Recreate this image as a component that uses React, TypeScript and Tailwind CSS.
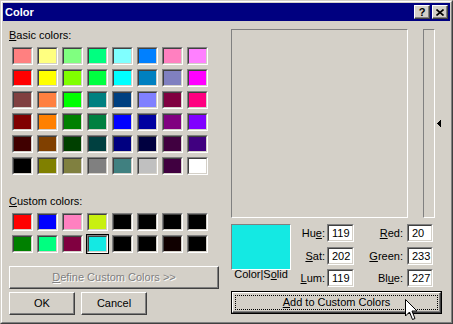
import * as React from 'react';
import clsx from 'clsx';

const basicColors = [
	'bg-[#ff8080]', 'bg-[#ffff80]', 'bg-[#80ff80]', 'bg-[#00ff80]', 'bg-[#80ffff]', 'bg-[#0080ff]', 'bg-[#ff80c0]', 'bg-[#ff80ff]',
	'bg-[#ff0000]', 'bg-[#ffff00]', 'bg-[#80ff00]', 'bg-[#00ff40]', 'bg-[#00ffff]', 'bg-[#0080c0]', 'bg-[#8080c0]', 'bg-[#ff00ff]',
	'bg-[#804040]', 'bg-[#ff8040]', 'bg-[#00ff00]', 'bg-[#008080]', 'bg-[#004080]', 'bg-[#8080ff]', 'bg-[#800040]', 'bg-[#ff0080]',
	'bg-[#800000]', 'bg-[#ff8000]', 'bg-[#008000]', 'bg-[#008040]', 'bg-[#0000ff]', 'bg-[#0000a0]', 'bg-[#800080]', 'bg-[#8000ff]',
	'bg-[#400000]', 'bg-[#804000]', 'bg-[#004000]', 'bg-[#004040]', 'bg-[#000080]', 'bg-[#000040]', 'bg-[#400040]', 'bg-[#400080]',
	'bg-[#000000]', 'bg-[#808000]', 'bg-[#808040]', 'bg-[#808080]', 'bg-[#408080]', 'bg-[#c0c0c0]', 'bg-[#400040]', 'bg-[#ffffff]',
];

const customColors = [
	'bg-[#ff0000]', 'bg-[#0000ff]', 'bg-[#ff80c0]', 'bg-[#c8f010]', 'bg-[#000000]', 'bg-[#000000]', 'bg-[#000000]', 'bg-[#000000]',
	'bg-[#008000]', 'bg-[#00ff80]', 'bg-[#800040]', 'bg-[#14e9e3]', 'bg-[#000000]', 'bg-[#000000]', 'bg-[#100000]', 'bg-[#000000]',
];

const sunken = 'border border-t-[#808080] border-l-[#808080] border-r-white border-b-white';
const sunkenInner = 'border border-t-[#404040] border-l-[#404040] border-r-[#d4d0c8] border-b-[#d4d0c8]';
const raised =
	'border border-t-white border-l-white border-b-[#404040] border-r-[#404040] shadow-[inset_-1px_-1px_#808080]';

function Swatch({ color, selected }: { color: string; selected?: boolean }) {
	return (
		<div className={clsx('h-[18px] w-[21px]', sunken, selected && 'outline-1 outline-black')}>
			<div className={clsx('h-full w-full', sunkenInner, color)} />
		</div>
	);
}

function Field({ value, width }: { value: string; width: string }) {
	return (
		<div className={clsx('h-[18px]', width, sunken)}>
			<div className={clsx('h-full bg-white pl-[3px] leading-[14px]', sunkenInner)}>{value}</div>
		</div>
	);
}

function Button({ children, className }: { children: React.ReactNode; className?: string }) {
	return <div className={clsx('flex items-center justify-center', raised, className)}>{children}</div>;
}

export default function App() {
	return (
		<div className="relative h-[324px] w-[453px] border border-t-[#d4d0c8] border-l-[#d4d0c8] border-b-[#404040] border-r-[#404040] bg-[#d4d0c8] font-['Liberation_Sans',Arial,sans-serif] text-[11px] leading-[13px] text-black">
			<div className="flex h-full flex-col border border-t-white border-l-white border-b-[#808080] border-r-[#808080] p-[1px]">
				{/* title bar */}
				<div className="flex h-[18px] items-center bg-[#000080] pl-[2px] pr-[2px]">
					<span className="flex-1 text-[11px] font-bold text-white">Color</span>
					<Button className="h-[14px] w-[16px] bg-[#d4d0c8] text-[11px] font-bold leading-none">?</Button>
					<Button className="ml-[2px] h-[14px] w-[16px] bg-[#d4d0c8]">
						<svg width="8" height="7" viewBox="0 0 8 7">
							<path d="M0.5 0.5 L7.5 6.5 M7.5 0.5 L0.5 6.5" stroke="black" strokeWidth="1.6" />
						</svg>
					</Button>
				</div>

				<div className="flex flex-1 pl-[6px] pt-[8px]">
					{/* left column */}
					<div className="flex w-[210px] flex-col">
						<div>
							<u>B</u>asic colors:
						</div>
						<div className="ml-[3px] mt-[5px] grid grid-cols-[repeat(8,21px)] gap-[4px]">
							{basicColors.map((c, i) => (
								<Swatch key={i} color={c} />
							))}
						</div>
						<div className="mt-[20px]">
							<u>C</u>ustom colors:
						</div>
						<div className="ml-[3px] mt-[5px] grid grid-cols-[repeat(8,21px)] gap-[4px]">
							{customColors.map((c, i) => (
								<Swatch key={i} color={c} selected={i === 11} />
							))}
						</div>
						<Button className="mt-[13px] h-[23px] w-[210px] text-[#808080] [text-shadow:1px_1px_0_#ffffff]">
							<span>
								<u>D</u>efine Custom Colors &gt;&gt;
							</span>
						</Button>
						<div className="mt-[3px] flex gap-[6px]">
							<Button className="h-[23px] w-[66px]">OK</Button>
							<Button className="h-[23px] w-[66px]">Cancel</Button>
						</div>
					</div>

					{/* right column */}
					<div className="ml-[12px] flex w-[211px] flex-col">
						<div className="flex">
							<div className={clsx('h-[189px] w-[177px]', sunken)} />
							<div className={clsx('ml-[15px] h-[189px] w-[12px]', sunken)} />
							<div className="ml-[1px] pt-[90px]">
								<svg width="5" height="9" viewBox="0 0 5 9" shapeRendering="crispEdges">
									<polygon points="5,0 5,9 0.5,4.5" fill="black" />
								</svg>
							</div>
						</div>

						<div className="mt-[6px] flex">
							<div className="flex w-[60px] flex-col">
								<div className={clsx('h-[46px] w-[60px] bg-[#14e9e3]', sunken)} />
								<div className="-mt-[2px] text-center">
									Color|S<u>o</u>lid
								</div>
							</div>
							<div className="flex w-[63px] flex-col items-end">
								<div className="flex items-center gap-[2px]">
									<span>
										Hu<u>e</u>:
									</span>
									<Field value="119" width="w-[27px]" />
								</div>
								<div className="mt-[5px] flex items-center gap-[2px]">
									<span>
										<u>S</u>at:
									</span>
									<Field value="202" width="w-[27px]" />
								</div>
								<div className="mt-[4px] flex items-center gap-[2px]">
									<span>
										<u>L</u>um:
									</span>
									<Field value="119" width="w-[27px]" />
								</div>
							</div>
							<div className="flex w-[79px] flex-col items-end">
								<div className="flex items-center gap-[4px]">
									<span>
										<u>R</u>ed:
									</span>
									<Field value="20" width="w-[26px]" />
								</div>
								<div className="mt-[5px] flex items-center gap-[4px]">
									<span>
										<u>G</u>reen:
									</span>
									<Field value="233" width="w-[26px]" />
								</div>
								<div className="mt-[4px] flex items-center gap-[4px]">
									<span>
										Bl<u>u</u>e:
									</span>
									<Field value="227" width="w-[26px]" />
								</div>
							</div>
						</div>

						<div className="mt-[4px] h-[23px] w-[211px] border border-black">
							<Button className="h-full w-full">
								<div className="flex h-[15px] w-[203px] items-center justify-center border border-dotted border-black">
									<span>
										<u>A</u>dd to Custom Colors
									</span>
								</div>
							</Button>
						</div>
					</div>
				</div>
			</div>

			{/* mouse pointer */}
			<svg className="absolute left-[404px] top-[298px]" width="13" height="22" viewBox="0 0 13 22">
				<path d="M0.5 0.5 L0.5 17 L4.5 13 L7.5 20.5 L10 19.5 L7 12 L12 12 Z" fill="white" stroke="black" strokeWidth="1" />
			</svg>
		</div>
	);
}
